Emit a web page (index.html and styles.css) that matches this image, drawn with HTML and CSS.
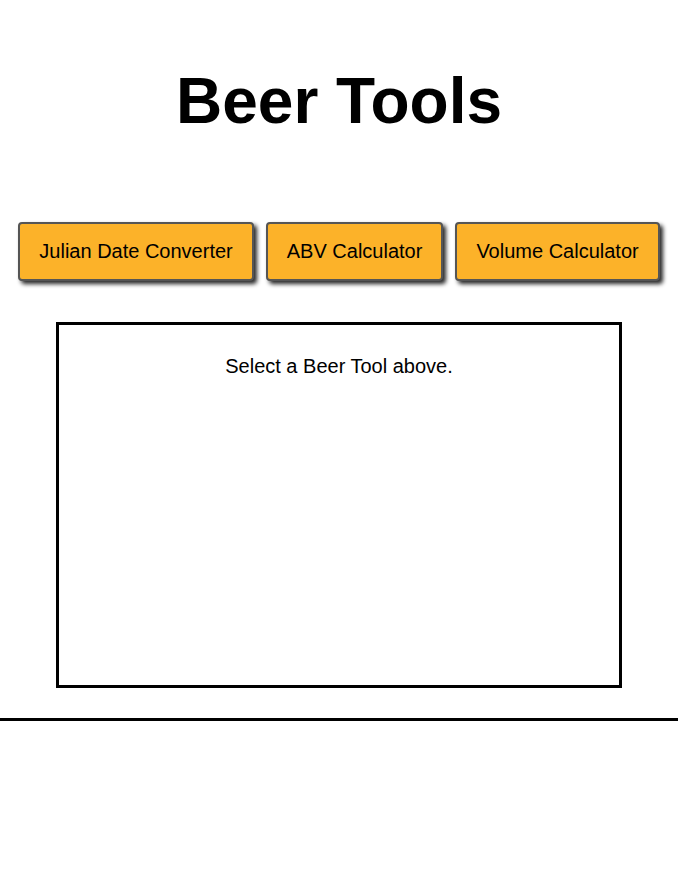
FILE: index.html
```html
<!DOCTYPE html>
<html>
<head>
<meta charset="utf-8">
<title>Beer Tools</title>
<link rel="stylesheet" href="styles.css">
</head>
<body>
<h1 class="title">Beer Tools</h1>
<nav class="tools">
  <button class="tool-btn">Julian Date Converter</button>
  <button class="tool-btn">ABV Calculator</button>
  <button class="tool-btn">Volume Calculator</button>
</nav>
<section class="panel">
  <p class="panel-text">Select a Beer Tool above.</p>
</section>
<hr class="divider">
</body>
</html>
```
FILE: styles.css
```css
html, body {
  margin: 0;
  padding: 0;
  background: #fff;
  font-family: "Liberation Sans", Arial, sans-serif;
  color: #000;
}
.title {
  margin: 0;
  padding-top: 64px;
  font-size: 64px;
  line-height: 74px;
  font-weight: bold;
  text-align: center;
}
.tools {
  display: flex;
  justify-content: center;
  gap: 12px;
  margin-top: 84px;
}
.tool-btn {
  font-family: "Liberation Sans", Arial, sans-serif;
  font-size: 20px;
  line-height: 23px;
  padding: 16px 19px;
  background: #fcb229;
  color: #000;
  border: 2px solid #555;
  border-radius: 4px;
  box-shadow: 3px 3px 4px rgba(0,0,0,0.85);
}
.panel {
  width: 560px;
  height: 360px;
  margin: 41px auto 0;
  border: 3px solid #000;
  box-sizing: content-box;
}
.panel-text {
  margin: 30px 0 0;
  font-size: 20px;
  line-height: 23px;
  text-align: center;
}
.divider {
  margin: 30px 0 0;
  border: 0;
  border-top: 3px solid #000;
  height: 0;
}
```
